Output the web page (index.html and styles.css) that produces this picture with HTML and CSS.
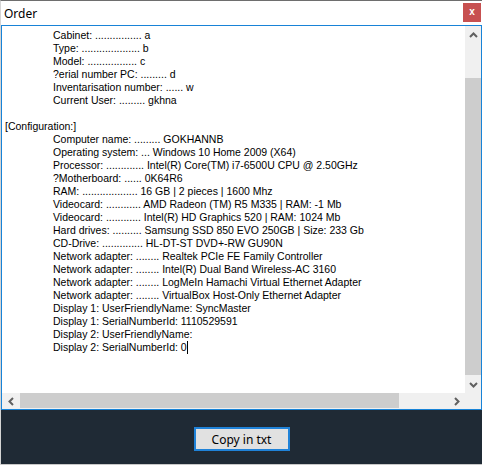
FILE: index.html
```html
<!DOCTYPE html>
<html>
<head>
    <meta charset="utf-8">
    <title>Order</title>
    <link rel="stylesheet" href="styles.css">
</head>
<body>
<div class="window">
    <div class="titlebar">
        <span class="title">Order</span>
        <span class="close">x</span>
    </div>
    <div class="textbox">
        <div class="content">
            <div class="ind">Cabinet: ................ a</div>
            <div class="ind">Type: .................... b</div>
            <div class="ind">Model: ................. c</div>
            <div class="ind">?erial number PC: ......... d</div>
            <div class="ind">Inventarisation number: ...... w</div>
            <div class="ind">Current User: ......... gkhna</div>
            <div>&nbsp;</div>
            <div>[Configuration:]</div>
            <div class="ind">Computer name: ......... GOKHANNB</div>
            <div class="ind">Operating system: ... Windows 10 Home 2009 (X64)</div>
            <div class="ind">Processor: ............. Intel(R) Core(TM) i7-6500U CPU @ 2.50GHz</div>
            <div class="ind">?Motherboard: ...... 0K64R6</div>
            <div class="ind">RAM: ................... 16 GB | 2 pieces | 1600 Mhz</div>
            <div class="ind">Videocard: ............ AMD Radeon (TM) R5 M335 | RAM: -1 Mb</div>
            <div class="ind">Videocard: ............ Intel(R) HD Graphics 520 | RAM: 1024 Mb</div>
            <div class="ind">Hard drives: .......... Samsung SSD 850 EVO 250GB | Size: 233 Gb</div>
            <div class="ind">CD-Drive: .............. HL-DT-ST DVD+-RW GU90N</div>
            <div class="ind">Network adapter: ........ Realtek PCIe FE Family Controller</div>
            <div class="ind">Network adapter: ........ Intel(R) Dual Band Wireless-AC 3160</div>
            <div class="ind">Network adapter: ........ LogMeIn Hamachi Virtual Ethernet Adapter</div>
            <div class="ind">Network adapter: ........ VirtualBox Host-Only Ethernet Adapter</div>
            <div class="ind">Display 1: UserFriendlyName: SyncMaster</div>
            <div class="ind">Display 1: SerialNumberId: 1110529591</div>
            <div class="ind">Display 2: UserFriendlyName:</div>
            <div class="ind">Display 2: SerialNumberId: 0<span class="caret"></span></div>
        </div>
        <div class="vscroll">
            <div class="arrow">
                <svg width="9" height="6" viewBox="0 0 9 6"><path d="M1 5 L4.5 1.5 L8 5" fill="none" stroke="#606060" stroke-width="2"/></svg>
            </div>
            <div class="track"><div class="thumb"></div></div>
            <div class="arrow">
                <svg width="9" height="6" viewBox="0 0 9 6"><path d="M1 1 L4.5 4.5 L8 1" fill="none" stroke="#606060" stroke-width="2"/></svg>
            </div>
        </div>
        <div class="hscroll">
            <div class="arrow">
                <svg width="6" height="9" viewBox="0 0 6 9"><path d="M5 1 L1.5 4.5 L5 8" fill="none" stroke="#606060" stroke-width="2"/></svg>
            </div>
            <div class="track"><div class="thumb"></div></div>
            <div class="arrow">
                <svg width="6" height="9" viewBox="0 0 6 9"><path d="M1 1 L4.5 4.5 L1 8" fill="none" stroke="#606060" stroke-width="2"/></svg>
            </div>
        </div>
        <div class="corner"></div>
    </div>
    <div class="footer">
        <button class="copy">Copy in txt</button>
    </div>
</div>
</body>
</html>
```

FILE: styles.css
```css
* {
    margin: 0;
    padding: 0;
    box-sizing: border-box;
}

body {
    width: 482px;
    height: 465px;
    overflow: hidden;
    background: #fff;
    font-family: "Liberation Sans", Arial, sans-serif;
}

.window {
    width: 482px;
    height: 465px;
    border-top: 1px solid #6e6e6e;
    border-left: 1px solid #d4d4d4;
    display: flex;
    flex-direction: column;
}

.titlebar {
    height: 24px;
    display: flex;
    align-items: flex-start;
    justify-content: space-between;
}

.title {
    font-family: "Noto Sans", "Liberation Sans", sans-serif;
    font-size: 12px;
    color: #000;
    padding: 4px 0 0 3px;
}

.close {
    width: 18px;
    height: 19px;
    margin: 2px 1px 0 0;
    background: #c75050;
    color: #fff;
    font-size: 10px;
    font-weight: bold;
    text-align: center;
    line-height: 17px;
}

.textbox {
    height: 385px;
    border: 1px solid #1883d7;
    display: grid;
    grid-template-columns: 1fr 16px;
    grid-template-rows: 367px 16px;
}

.content {
    padding: 3px 0 0 3px;
    font-size: 10.5px;
    line-height: 13px;
    color: #000;
    white-space: nowrap;
    overflow: hidden;
}

.ind {
    padding-left: 48px;
}

.caret {
    display: inline-block;
    width: 1px;
    height: 13px;
    background: #000;
    vertical-align: top;
}

.vscroll, .hscroll, .corner {
    background: #f0f0f0;
    display: flex;
}

.vscroll {
    flex-direction: column;
}

.vscroll .arrow {
    height: 17px;
    display: flex;
    align-items: center;
    justify-content: center;
}

.vscroll .track {
    flex: 1;
    padding-top: 35px;
}

.vscroll .thumb {
    height: 297px;
    background: #cdcdcd;
}

.hscroll .arrow {
    width: 17px;
    display: flex;
    align-items: center;
    justify-content: center;
}

.hscroll .track {
    flex: 1;
    padding-left: 1px;
}

.hscroll .thumb {
    width: 379px;
    height: 15px;
    background: #cdcdcd;
}

.footer {
    flex: 1;
    background: #1f2a35;
    border-bottom: 1px solid #c8c8c8;
    display: flex;
    justify-content: center;
    padding-top: 17px;
}

.copy {
    width: 96px;
    height: 24px;
    border: 2px solid #1f82d8;
    background: #e1e1e1;
    font-family: "Noto Sans", "Liberation Sans", sans-serif;
    font-size: 12px;
    color: #000;
}
```
